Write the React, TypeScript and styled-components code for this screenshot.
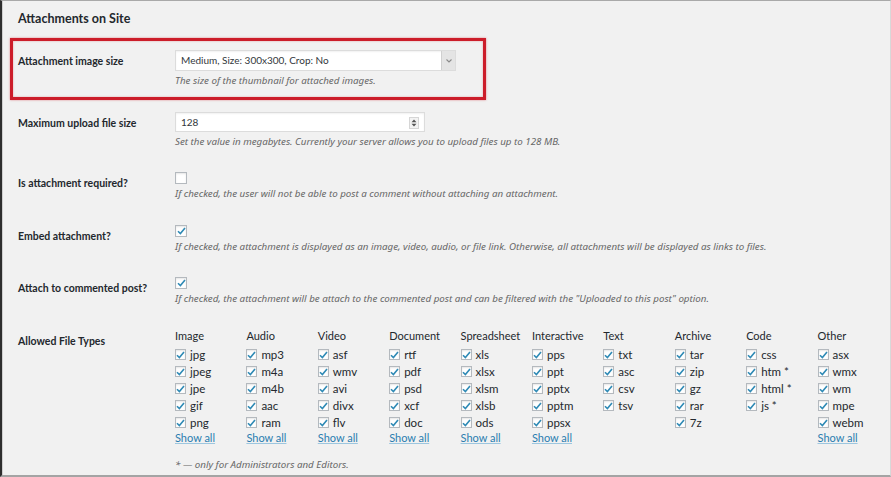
import { createGlobalStyle, styled } from "styled-components";

const GlobalStyle = createGlobalStyle`
  html, body {
    margin: 0;
    padding: 0;
    background: #f1f1f1;
  }
  body {
    font-family: Lato, "Noto Sans", sans-serif;
    color: #23282d;
  }
`;

const Frame = styled.div`
  width: 891px;
  height: 477px;
  box-sizing: border-box;
  border-top: 1px solid #a9a9a9;
  border-left: 2px solid #2e2e2e;
  border-bottom: 2px solid #a4a4a4;
  border-right: 1px solid #d8d8d8;
  box-shadow: inset 1px 0 0 #cfcfcf;
  padding-left: 16px;
  overflow: hidden;
`;

const Heading = styled.h2`
  margin: 9px 0 10px;
  font-size: 12.5px;
  line-height: 18px;
  font-weight: 700;
`;

const Row = styled.div<{ $highlighted?: boolean }>`
  display: flex;
  align-items: flex-start;
  box-sizing: border-box;
  padding: 12px 0;
  ${({ $highlighted }) =>
    $highlighted &&
    `
    margin-left: -8px;
    width: 476px;
    padding: 9px 0 9px 5px;
    border: 3px solid #cc1d2a;
    box-shadow: 0 0 2px rgba(204, 29, 42, 0.5), inset 0 0 2px rgba(204, 29, 42, 0.4);
  `}
`;

const Label = styled.div`
  width: 157px;
  flex-shrink: 0;
  padding-top: 4px;
  font-size: 10.5px;
  line-height: 14px;
  font-weight: 700;
`;

const Field = styled.div`
  display: flex;
  flex-direction: column;
  align-items: flex-start;
  gap: 4px;
`;

const Description = styled.div<{ $top?: number }>`
  font-family: "Noto Sans", sans-serif;
  font-size: 9.75px;
  line-height: 12.5px;
  font-style: italic;
  color: #666;
  margin-top: ${({ $top }) => $top ?? 0}px;
`;

const SelectBox = styled.div`
  position: relative;
  width: 281px;
  height: 21px;
  box-sizing: border-box;
  background: #fff;
  border: 1px solid #dcdcdc;
  box-shadow: inset 0 1px 2px rgba(0, 0, 0, 0.06);
  font-size: 10px;
  line-height: 19px;
  color: #32373c;
  padding-left: 5px;
`;

const SelectArrow = styled.div`
  position: absolute;
  right: 0;
  top: 0;
  bottom: 0;
  width: 13px;
  background: #e4e4e4;
  border-left: 1px solid #d0d0d0;
  display: flex;
  align-items: center;
  justify-content: center;
`;

const NumberBox = styled(SelectBox)`
  width: 250px;
  height: 20px;
  line-height: 18px;
`;

const Spinner = styled.div`
  position: absolute;
  right: 5px;
  top: 4px;
  width: 8px;
  height: 10px;
  border: 1px solid #d6d6d6;
  background: #f3f3f3;
  display: flex;
  align-items: center;
  justify-content: center;
`;

const Box = styled.span<{ $size: number }>`
  width: ${({ $size }) => $size}px;
  height: ${({ $size }) => $size}px;
  box-sizing: border-box;
  flex-shrink: 0;
  background: #fff;
  border: 1px solid #b4b9be;
  box-shadow: inset 0 1px 2px rgba(0, 0, 0, 0.1);
  display: flex;
  align-items: center;
  justify-content: center;
`;

const TypesGrid = styled.div`
  display: grid;
  grid-template-columns: repeat(10, 71.4px);
  align-items: start;
`;

const TypeColumn = styled.div`
  display: flex;
  flex-direction: column;
`;

const TypeHeader = styled.div`
  font-size: 11px;
  line-height: 14px;
  margin-top: -1px;
  margin-bottom: 3.5px;
  white-space: nowrap;
`;

const TypeItem = styled.label`
  display: flex;
  align-items: center;
  gap: 4px;
  height: 17px;
  font-size: 11.5px;
  white-space: nowrap;
`;

const ShowAll = styled.a`
  font-size: 11px;
  line-height: 14px;
  color: #2a7db0;
  text-decoration: underline;
  text-decoration-color: #9cc6df;
  cursor: pointer;
`;

const Check = () => (
  <svg width="9" height="8" viewBox="0 0 9 8">
    <path d="M1 4.2 L3.4 6.6 L8 1" fill="none" stroke="#2f8ab5" strokeWidth="1.6" />
  </svg>
);

const Checkbox = ({ checked, size = 12 }: { checked?: boolean; size?: number }) => (
  <Box $size={size}>{checked && <Check />}</Box>
);

const fileTypes: { name: string; items: string[]; showAll: boolean }[] = [
  { name: "Image", items: ["jpg", "jpeg", "jpe", "gif", "png"], showAll: true },
  { name: "Audio", items: ["mp3", "m4a", "m4b", "aac", "ram"], showAll: true },
  { name: "Video", items: ["asf", "wmv", "avi", "divx", "flv"], showAll: true },
  { name: "Document", items: ["rtf", "pdf", "psd", "xcf", "doc"], showAll: true },
  { name: "Spreadsheet", items: ["xls", "xlsx", "xlsm", "xlsb", "ods"], showAll: true },
  { name: "Interactive", items: ["pps", "ppt", "pptx", "pptm", "ppsx"], showAll: true },
  { name: "Text", items: ["txt", "asc", "csv", "tsv"], showAll: false },
  { name: "Archive", items: ["tar", "zip", "gz", "rar", "7z"], showAll: false },
  { name: "Code", items: ["css", "htm *", "html *", "js *"], showAll: false },
  { name: "Other", items: ["asx", "wmx", "wm", "mpe", "webm"], showAll: true },
];

const checkRows = [
  {
    label: "Is attachment required?",
    checked: false,
    text: "If checked, the user will not be able to post a comment without attaching an attachment.",
  },
  {
    label: "Embed attachment?",
    checked: true,
    text: "If checked, the attachment is displayed as an image, video, audio, or file link. Otherwise, all attachments will be displayed as links to files.",
  },
  {
    label: "Attach to commented post?",
    checked: true,
    text: 'If checked, the attachment will be attach to the commented post and can be filtered with the "Uploaded to this post" option.',
  },
];

export default function App() {
  return (
    <>
      <GlobalStyle />
      <Frame>
        <Heading>Attachments on Site</Heading>

        <Row $highlighted>
          <Label>Attachment image size</Label>
          <Field>
            <SelectBox>
              Medium, Size: 300x300, Crop: No
              <SelectArrow>
                <svg width="6" height="4" viewBox="0 0 6 4">
                  <path d="M0.5 0.5 L3 3 L5.5 0.5" fill="none" stroke="#8a8a8a" strokeWidth="1.1" />
                </svg>
              </SelectArrow>
            </SelectBox>
            <Description>The size of the thumbnail for attached images.</Description>
          </Field>
        </Row>

        <Row>
          <Label>Maximum upload file size</Label>
          <Field>
            <NumberBox>
              128
              <Spinner>
                <svg width="6" height="8" viewBox="0 0 6 8">
                  <path d="M3 0.5 L5.5 3.3 L0.5 3.3 Z M3 7.5 L5.5 4.7 L0.5 4.7 Z" fill="#555" />
                </svg>
              </Spinner>
            </NumberBox>
            <Description>
              Set the value in megabytes. Currently your server allows you to upload files up to 128 MB.
            </Description>
          </Field>
        </Row>

        {checkRows.map((row) => (
          <Row key={row.label}>
            <Label>{row.label}</Label>
            <Field>
              <Checkbox checked={row.checked} />
              <Description>{row.text}</Description>
            </Field>
          </Row>
        ))}

        <Row>
          <Label>Allowed File Types</Label>
          <Field>
            <TypesGrid>
              {fileTypes.map((group) => (
                <TypeColumn key={group.name}>
                  <TypeHeader>{group.name}</TypeHeader>
                  {group.items.map((item) => (
                    <TypeItem key={item}>
                      <Checkbox checked size={11} />
                      {item}
                    </TypeItem>
                  ))}
                  {group.showAll && <ShowAll>Show all</ShowAll>}
                </TypeColumn>
              ))}
            </TypesGrid>
            <Description $top={10}>* — only for Administrators and Editors.</Description>
          </Field>
        </Row>
      </Frame>
    </>
  );
}
